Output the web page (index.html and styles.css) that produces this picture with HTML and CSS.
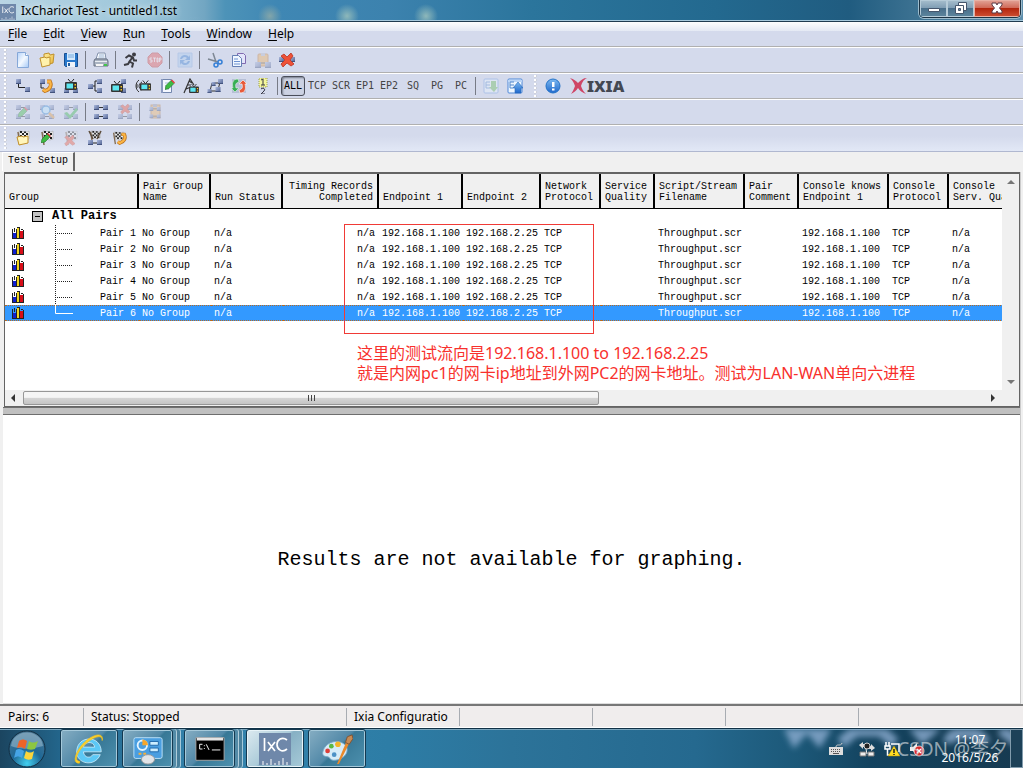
FILE: index.html
```html
<!DOCTYPE html>
<html lang="zh-CN">
<head>
<meta charset="utf-8">
<title>IxChariot Test - untitled1.tst</title>
<link rel="stylesheet" href="styles.css">
</head>
<body>
<svg class="sprite" aria-hidden="true">
  <defs>
    <linearGradient id="page-g" x1="0" y1="0" x2="1" y2="1"><stop offset="0" stop-color="#b4d2fa"/><stop offset=".5" stop-color="#f4f9ff"/><stop offset="1" stop-color="#a4c8f6"/></linearGradient>
    <linearGradient id="blue-g" x1="0" y1="0" x2="0" y2="1"><stop offset="0" stop-color="#7cb8f0"/><stop offset="1" stop-color="#1e68cc"/></linearGradient>
    <linearGradient id="gold-g" x1="0" y1="0" x2="1" y2="1"><stop offset="0" stop-color="#fff0a0"/><stop offset="1" stop-color="#e8b438"/></linearGradient>
    <linearGradient id="node-g" x1="0" y1="0" x2="1" y2="1"><stop offset="0" stop-color="#aab8dc"/><stop offset="1" stop-color="#4e6090"/></linearGradient>
    <radialGradient id="orb-g" cx=".5" cy=".9" r=".9"><stop offset="0" stop-color="#42d0f0"/><stop offset=".45" stop-color="#1f6896"/><stop offset="1" stop-color="#4c7894"/></radialGradient>
    <symbol id="node" viewBox="0 0 5 5"><path d="M0 0h5v5H0z" fill="url(#node-g)"/><path d="M0 4h5v1H0z" fill="#43537e"/></symbol>
    <symbol id="nodes4" viewBox="0 0 16 16"><path d="M4 3.500h8M4 12.500h8" stroke="#333"/><use href="#node" x="1" y="1" width="5" height="5"/><use href="#node" x="10" y="1" width="5" height="5"/><use href="#node" x="1" y="10" width="5" height="5"/><use href="#node" x="10" y="10" width="5" height="5"/></symbol>
    <symbol id="flag" viewBox="0 0 16 16"><path d="M4 1l8 1 2-1v8l-3 1-6-1z" fill="#eee" stroke="#999" stroke-width=".5"/><path d="M5 1h2v2h2v2h2V3h2v2h-2v2H9V5H7v2H5V5h2V3H5zM7 7h2v2H7zM11 7h2v2h-2zM9 1.500h2V3H9z" fill="#222"/><path d="M3 2l2 13" stroke="#806a50" stroke-width="1.500"/></symbol>
    <symbol id="tv" viewBox="0 0 12 11"><path d="M3 0l3 3.500L9 0" fill="none" stroke="#222"/><rect y="3" width="12" height="8" rx="1" fill="#333"/><path d="M1.500 4.500H8v5H1.500z" fill="#5de6f0"/><path d="M9.500 5h1.500v1.500H9.500zM9.500 8h1.500v1.500H9.500z" fill="#f4c62a"/></symbol>
    <symbol id="phone" viewBox="0 0 12 14"><path d="M6 2.500h3c2 4 0 8-5 9.500l-2-1.500" fill="none" stroke="#b9701c" stroke-width="3.800"/><path d="M6 2.500h3c2 4 0 8-5 9.500l-2-1.500" fill="none" stroke="#fbb545" stroke-width="2.400"/></symbol>
    <symbol id="pencil" viewBox="0 0 10 10"><path d="M0 10l1-4 5-5 3 3-5 5z" fill="#3dbb44" stroke="#27702b" stroke-width=".6"/><path d="M6 1l1-1 3 3-1 1z" fill="#e33838"/></symbol>
    <symbol id="cross" viewBox="0 0 14 14"><path d="M1 3l3-2 3 3 4-4 2 3-3 4 4 4-3 2-4-3-4 4-2-3 4-4z" fill="#ee5137" stroke="#b93422" stroke-width=".8"/></symbol>

    <symbol id="i-new" viewBox="0 0 16 16"><path d="M2.500.5h8l3 3v12h-11z" fill="url(#page-g)" stroke="#86a8d8"/><path d="M10.500.5v3h3" fill="#fff" stroke="#86a8d8"/></symbol>
    <symbol id="i-open" viewBox="0 0 16 16"><path d="M5 2l5-1 1 2 4-1-1 9-9 2z" fill="url(#gold-g)" stroke="#bf912e"/><path d="M1 6l5-1 1 1 4-1v8l-8 2z" fill="#fff2ac" stroke="#bf912e"/></symbol>
    <symbol id="i-save" viewBox="0 0 16 16"><path d="M1.500 1.500h13v13h-12l-1-1z" fill="#2878cc" stroke="#1a4f91"/><path d="M4 1h8v7H4z" fill="#d5e9fc"/><path d="M5 3h6M5 5h6" stroke="#74a9dd"/><path d="M4 10h8v5H4z" fill="#eef3fa"/><path d="M5 11h2v3H5z" fill="#245c9c"/></symbol>
    <symbol id="i-print" viewBox="0 0 16 16"><path d="M5 1h7l1 6H3z" fill="#fafcff" stroke="#8291ab"/><path d="M6 3h5M5.500 5h6" stroke="#9ab4d3"/><path d="M2 7h12l1 2v5H1V9z" fill="#a9b3c1" stroke="#667082"/><path d="M2 9.500h12" stroke="#e9edf2"/><path d="M3 12h7v2H3z" fill="#f5f5f5"/><path d="M11 12h3v2h-3z" fill="#43c64a"/></symbol>
    <symbol id="i-run" viewBox="0 0 16 16"><circle cx="11" cy="2.500" r="2" fill="#3c3c42"/><path d="M2.500 6L6 3.500l4 2 1 3h3M9 6L6.500 9.500l3.500 2-1 4M7 9l-2 3-4 1" fill="none" stroke="#3c3c42" stroke-width="2"/></symbol>
    <symbol id="i-stop" viewBox="0 0 16 16"><path d="M5 1h6l4 4v6l-4 4H5l-4-4V5z" fill="#e85450" stroke="#c33b3b"/><path d="M5 6H3v2h2v2H3M6 6h3M7.500 6v4M10 6h1v4h-1zM12.500 10V6H14v2h-1" fill="none" stroke="#fff" stroke-width=".8"/></symbol>
    <symbol id="i-refresh" viewBox="0 0 16 16"><path d="M1 1h14v14H1z" fill="#a8cbf1" stroke="#88aee0"/><path d="M3 7c1-5 7-5 9-2l1-2v5H8l2-2C8 4 6 5 5 7zM13 9c-1 5-7 5-9 2l-1 2V8h5l-2 2c2 2 4 1 5-1z" fill="#337bd0"/></symbol>
    <symbol id="i-cut" viewBox="0 0 16 16"><path d="M6 1l3 9M1 7l10 3" stroke="#7d8794" stroke-width="1.500"/><circle cx="9" cy="13" r="2" fill="none" stroke="#347fd6" stroke-width="1.500"/><circle cx="13" cy="10" r="2" fill="none" stroke="#347fd6" stroke-width="1.500"/></symbol>
    <symbol id="i-copy" viewBox="0 0 16 16"><path d="M6.500 1.500h6l2 2v8h-8z" fill="#e3e5fa" stroke="#806ab0"/><path d="M1.500 3.500h6l3 3v8h-9z" fill="#f1f7ff" stroke="#6680b5"/><path d="M3 7h4M3 9.500h6M3 12h6" stroke="#6d92d2"/></symbol>
    <symbol id="i-paste" viewBox="0 0 16 16"><rect x="3" y="2" width="10" height="12" rx="1" fill="#f1af54" stroke="#bd7b36"/><path d="M6 1h4v3H6z" fill="#b7b9c9"/><path d="M4 11h8" stroke="#444"/><use href="#node" x="0" y="10" width="6" height="6"/><use href="#node" x="10" y="10" width="6" height="6"/></symbol>
    <symbol id="i-delete" viewBox="0 0 16 16"><use href="#node" x="0" y="5" width="5" height="5"/><use href="#node" x="11" y="5" width="5" height="5"/><use href="#cross" x="1" y="1" width="14" height="14"/></symbol>
    <symbol id="i-pair" viewBox="0 0 16 16"><path d="M3.500 5v4.500H12" fill="none" stroke="#222"/><use href="#node" x="1" y="1" width="5" height="5"/><use href="#node" x="10" y="9" width="5" height="5"/></symbol>
    <symbol id="i-voip" viewBox="0 0 16 16"><use href="#node" x="1" y="1" width="5" height="5"/><use href="#node" x="11" y="10" width="5" height="5"/><path d="M2 6v4M2 10h3" stroke="#222"/><use href="#phone" x="2" y="1" width="12" height="14"/></symbol>
    <symbol id="i-video" viewBox="0 0 16 16"><use href="#node" x="1" y="10" width="5" height="5"/><use href="#node" x="10" y="10" width="5" height="5"/><use href="#tv" x="2" y="1" width="12" height="11"/></symbol>
    <symbol id="i-multi" viewBox="0 0 16 16"><path d="M5 8h3M12 3H8v10h4" fill="none" stroke="#222"/><use href="#node" x="1" y="6" width="5" height="5"/><use href="#node" x="10" y="1" width="5" height="5"/><use href="#node" x="10" y="10" width="5" height="5"/></symbol>
    <symbol id="i-multivideo" viewBox="0 0 16 16"><use href="#node" x="10" y="1" width="5" height="5"/><use href="#node" x="10" y="10" width="5" height="5"/><use href="#tv" x="0" y="3" width="12" height="11"/></symbol>
    <symbol id="i-iptv" viewBox="0 0 16 16"><path d="M4 2C0 5 0 11 4 14M7 4c-4 2-4 6 0 8M2 6v4" fill="none" stroke="#333"/><use href="#tv" x="5" y="2" width="11" height="11"/></symbol>
    <symbol id="i-edit" viewBox="0 0 16 16"><path d="M2.500 1.500h10v13h-10z" fill="#f4f7ff" stroke="#7387ae"/><path d="M2 1h2v14H2z" fill="#8b9ac0"/><path d="M6 5h5M6 8h4M6 11h4" stroke="#abc0dc"/><use href="#pencil" x="6" y="1" width="10" height="11"/></symbol>
    <symbol id="i-antenna" viewBox="0 0 16 16"><path d="M1 15L7 1l4 6M3 11l5-2M4 7h4M6 3l3 2" fill="none" stroke="#333" stroke-width="1.200"/><use href="#tv" x="6" y="6" width="10" height="9"/></symbol>
    <symbol id="i-rep" viewBox="0 0 16 16"><path d="M3 13h7M6 5h7M5 5l-2 8M13 4l-2 8" fill="none" stroke="#333"/><use href="#node" x="4" y="4" width="5" height="4"/><use href="#node" x="11" y="1" width="5" height="5"/><use href="#node" x="0" y="11" width="5" height="4"/><use href="#node" x="8" y="9" width="6" height="5"/></symbol>
    <symbol id="i-swap" viewBox="0 0 16 16"><path d="M1 1h14v14H1z" fill="#b6bfd6"/><path d="M7 1C1 1 1 6 2 10H0l4 4 4-4H5c-1-4 0-5 3-6z" fill="#38ae55" stroke="#e2f4e5" stroke-width=".6"/><path d="M9 15c6 0 6-5 5-9h2l-4-4-4 4h3c1 4 0 5-3 6z" fill="#e85a3a" stroke="#fff" stroke-width=".6"/></symbol>
    <symbol id="i-number" viewBox="0 0 16 16"><path d="M4 0h8v9H4z" fill="#f4f69b" stroke="#9b9e4b" stroke-dasharray="1 1"/><path d="M6 2l2-1v6M6 7h4M6 11c2-2 5 0 3 2l-3 3h4" fill="none" stroke="#343442"/></symbol>
    <symbol id="i-editpair" viewBox="0 0 16 16"><use href="#nodes4" width="16" height="16"/><use href="#pencil" x="3" y="3" width="10" height="10"/></symbol>
    <symbol id="i-findpair" viewBox="0 0 16 16"><use href="#nodes4" width="16" height="16"/><circle cx="7" cy="6" r="4" fill="#bae9ff" stroke="#388bd5" stroke-width="1.500"/><path d="M10 9l5 5" stroke="#df9b43" stroke-width="2.500"/></symbol>
    <symbol id="i-okpair" viewBox="0 0 16 16"><use href="#nodes4" width="16" height="16"/><path d="M1 9l3-1 3 3 6-7 2 2-8 9z" fill="#36b34b"/></symbol>
    <symbol id="i-delpair" viewBox="0 0 16 16"><use href="#nodes4" width="16" height="16"/><use href="#cross" x="3" y="0" width="10" height="10"/></symbol>
    <symbol id="i-pastepair" viewBox="0 0 16 16"><rect x="4" y="1" width="9" height="13" fill="#f2b463" stroke="#b77e43"/><path d="M6 0h4v3H6z" fill="#9b9cad"/><use href="#nodes4" y="2" width="16" height="13"/></symbol>
    <symbol id="i-flagopen" viewBox="0 0 16 16"><use href="#flag" width="16" height="16"/><path d="M2 7l5-1 1 1 5-1v7l-9 2z" fill="#fff5bb" stroke="#c18e28"/></symbol>
    <symbol id="i-flagedit" viewBox="0 0 16 16"><use href="#flag" width="16" height="16"/><use href="#pencil" x="2" y="3" width="10" height="10"/></symbol>
    <symbol id="i-flagdel" viewBox="0 0 16 16"><use href="#flag" width="16" height="16"/><use href="#cross" x="1" y="5" width="11" height="11"/></symbol>
    <symbol id="i-flagpair" viewBox="0 0 16 16"><use href="#flag" x="1" width="14" height="14"/><path d="M2 1l4 8M14 1l-4 8" stroke="#5c4c3c" stroke-width="1.500"/><path d="M5 13h7" stroke="#222"/><use href="#node" x="1" y="10" width="5" height="5"/><use href="#node" x="10" y="10" width="5" height="5"/></symbol>
    <symbol id="i-flagphone" viewBox="0 0 16 16"><use href="#flag" width="14" height="16"/><use href="#phone" x="5" y="2" width="11" height="13"/></symbol>
    <symbol id="i-import" viewBox="0 0 16 16"><rect x="1" y="1" width="14" height="14" rx="1" fill="#eef7ff" stroke="#6e9de0"/><path d="M3 4v6h4M3 4h4M3 7h4" fill="none" stroke="#5288cc"/><path d="M8 3h5v6h2l-4 5-5-5h2z" fill="#69bb57"/></symbol>
    <symbol id="i-export" viewBox="0 0 16 16"><rect x="1" y="1" width="14" height="14" rx="1" fill="#eef7ff" stroke="#4e88d9"/><path d="M1 2h14v2H1z" fill="#bcd6f7"/><path d="M3 4v6h3M3 4h4M3 7h4" fill="none" stroke="#5288cc"/><path d="M8 15v-5H6l5-6 5 6h-2v5z" fill="url(#blue-g)" stroke="#2868b8" stroke-width=".6"/></symbol>
    <symbol id="i-info" viewBox="0 0 16 16"><circle cx="8" cy="8" r="7" fill="url(#blue-g)" stroke="#2473c8"/><path d="M7 4h2.500v5H7zM7 10.500h2.500v2H7z" fill="#fff"/></symbol>
    <symbol id="chart" viewBox="0 0 12 12"><path d="M0 2h1v9h11v1H0zM2 1h1v4H2zM5 0h3v1H5zM9 2h2v1H9z" fill="#222"/><path d="M1 6h3v5H1z" fill="#1020d0"/><path d="M4 2h1v9H4zM7 1h1v10H7zM11 3h1v8h-1z" fill="#222"/><path d="M5 1h2v10H5z" fill="#f2d61f"/><path d="M8 4h3v7H8z" fill="#d80d18"/></symbol>
    <symbol id="branch" viewBox="0 0 18 16"><path d="M.5 0v16M2 8.500h16" fill="none" stroke="#222" stroke-dasharray="1 1"/></symbol>
    <symbol id="branch-end" viewBox="0 0 18 16"><path d="M.5 0v8.500H18" fill="none" stroke="#fff"/></symbol>
    <symbol id="ixc" viewBox="0 0 32 32"><path d="M0 0h32v32H0z" fill="#6f88aa"/><path d="M5.500 5v13M9 9l7 9M16 9l-7 9M28 7c-5-4-10 0-10 4.500s5 9 10 4.500" fill="none" stroke="#fff" stroke-width="1.700"/><path d="M4 28v4M8 30v2M12 26v6M16 30v2M20 28v4M24 25v7M28 29v3" stroke="#fff"/></symbol>
  </defs>
</svg>

<div class="window">
  <header class="titlebar">
    <svg class="app-icon"><use href="#ixc"/></svg>
    <h1 class="title">IxChariot Test - untitled1.tst</h1>
    <div class="caption-buttons">
      <button class="cap" aria-label="Minimize"><svg class="cap-icon" viewBox="0 0 14 12"><path d="M1.500 6.500h11v3h-11z" fill="#fff" stroke="#45566c"/></svg></button>
      <button class="cap" aria-label="Restore"><svg class="cap-icon" viewBox="0 0 14 12"><path d="M4.500.5h8v8h-8z" fill="#fff" stroke="#45566c"/><path d="M1.500 3.500h8v8h-8z" fill="#fff" stroke="#45566c"/><path d="M4.500 6.500h2v2h-2z" fill="#6c8ca3" stroke="#45566c"/></svg></button>
      <button class="cap cap-close" aria-label="Close"><svg class="cap-icon" viewBox="0 0 14 12"><path d="M2 1h4l1 2 1-2h4v2L9.500 6 12 9v2H8L7 9l-1 2H2V9l2.500-3L2 3z" fill="#fff" stroke="#5d3a45"/></svg></button>
    </div>
  </header>

  <nav class="menubar">
    <button class="menu"><u>F</u>ile</button><button class="menu"><u>E</u>dit</button><button class="menu"><u>V</u>iew</button><button class="menu"><u>R</u>un</button><button class="menu"><u>T</u>ools</button><button class="menu"><u>W</u>indow</button><button class="menu"><u>H</u>elp</button>
  </nav>

  <div class="toolbar">
    <i class="grip"></i>
    <button class="tool" aria-label="New"><svg class="icon"><use href="#i-new"/></svg></button>
    <button class="tool" aria-label="Open"><svg class="icon"><use href="#i-open"/></svg></button>
    <button class="tool" aria-label="Save"><svg class="icon"><use href="#i-save"/></svg></button>
    <i class="sep"></i>
    <button class="tool" aria-label="Print"><svg class="icon"><use href="#i-print"/></svg></button>
    <i class="sep"></i>
    <button class="tool" aria-label="Run"><svg class="icon"><use href="#i-run"/></svg></button>
    <button class="tool" aria-label="Stop" disabled><svg class="icon"><use href="#i-stop"/></svg></button>
    <i class="sep"></i>
    <button class="tool" aria-label="Refresh" disabled><svg class="icon"><use href="#i-refresh"/></svg></button>
    <i class="sep"></i>
    <button class="tool" aria-label="Cut"><svg class="icon"><use href="#i-cut"/></svg></button>
    <button class="tool" aria-label="Copy"><svg class="icon"><use href="#i-copy"/></svg></button>
    <button class="tool" aria-label="Paste" disabled><svg class="icon"><use href="#i-paste"/></svg></button>
    <button class="tool" aria-label="Delete"><svg class="icon"><use href="#i-delete"/></svg></button>
  </div>

  <div class="toolbar">
    <i class="grip"></i>
    <button class="tool" aria-label="Add pair"><svg class="icon"><use href="#i-pair"/></svg></button>
    <button class="tool" aria-label="Add VoIP pair"><svg class="icon"><use href="#i-voip"/></svg></button>
    <button class="tool" aria-label="Add video pair"><svg class="icon"><use href="#i-video"/></svg></button>
    <button class="tool" aria-label="Add multicast group"><svg class="icon"><use href="#i-multi"/></svg></button>
    <button class="tool" aria-label="Add video multicast group"><svg class="icon"><use href="#i-multivideo"/></svg></button>
    <button class="tool" aria-label="Add IPTV"><svg class="icon"><use href="#i-iptv"/></svg></button>
    <button class="tool" aria-label="Edit"><svg class="icon"><use href="#i-edit"/></svg></button>
    <button class="tool" aria-label="Edit broadcast"><svg class="icon"><use href="#i-antenna"/></svg></button>
    <button class="tool" aria-label="Replicate"><svg class="icon"><use href="#i-rep"/></svg></button>
    <button class="tool" aria-label="Swap endpoints"><svg class="icon"><use href="#i-swap"/></svg></button>
    <button class="tool" aria-label="Renumber"><svg class="icon"><use href="#i-number"/></svg></button>
    <i class="sep"></i>
    <button class="tool text-tool pressed" aria-pressed="true">ALL</button>
    <button class="tool text-tool">TCP</button>
    <button class="tool text-tool">SCR</button>
    <button class="tool text-tool">EP1</button>
    <button class="tool text-tool">EP2</button>
    <button class="tool text-tool">SQ</button>
    <button class="tool text-tool">PG</button>
    <button class="tool text-tool">PC</button>
    <i class="sep"></i>
    <button class="tool" aria-label="Import" disabled><svg class="icon"><use href="#i-import"/></svg></button>
    <button class="tool" aria-label="Export"><svg class="icon"><use href="#i-export"/></svg></button>
    <i class="grip grip-mid"></i>
    <button class="tool" aria-label="About"><svg class="icon"><use href="#i-info"/></svg></button>
    <span class="brand"><svg class="brand-mark" viewBox="0 0 17 16"><path d="M0 0c4 1 6 3 8 5 3-3 5-5 9-5-4 2-5 5-6 8 1 3 2 5 5 8-4-2-6-3-8-6-2 3-4 4-7 6 2-3 3-5 4-8C4 5 3 3 0 0z" fill="#cf4566"/></svg><b class="brand-name">IXIA</b></span>
  </div>

  <div class="toolbar">
    <i class="grip"></i>
    <button class="tool" aria-label="Edit pair" disabled><svg class="icon"><use href="#i-editpair"/></svg></button>
    <button class="tool" aria-label="Find pair" disabled><svg class="icon"><use href="#i-findpair"/></svg></button>
    <button class="tool" aria-label="Enable pair" disabled><svg class="icon"><use href="#i-okpair"/></svg></button>
    <i class="sep"></i>
    <button class="tool" aria-label="Pairs"><svg class="icon"><use href="#nodes4"/></svg></button>
    <button class="tool" aria-label="Delete pair" disabled><svg class="icon"><use href="#i-delpair"/></svg></button>
    <i class="sep"></i>
    <button class="tool" aria-label="Paste pair" disabled><svg class="icon"><use href="#i-pastepair"/></svg></button>
  </div>

  <div class="toolbar toolbar-last">
    <i class="grip"></i>
    <button class="tool" aria-label="Open application group"><svg class="icon"><use href="#i-flagopen"/></svg></button>
    <button class="tool" aria-label="Edit application group"><svg class="icon"><use href="#i-flagedit"/></svg></button>
    <button class="tool" aria-label="Delete application group" disabled><svg class="icon"><use href="#i-flagdel"/></svg></button>
    <button class="tool" aria-label="Add pair to group"><svg class="icon"><use href="#i-flagpair"/></svg></button>
    <button class="tool" aria-label="Add VoIP to group"><svg class="icon"><use href="#i-flagphone"/></svg></button>
  </div>

  <div class="tabs"><button class="tab">Test Setup</button></div>

  <main class="content">
    <section class="list">
      <div class="list-view">
        <table class="pairs">
          <colgroup><col class="w-group"><col class="w72"><col class="w72"><col class="w96"><col class="w84"><col class="w78"><col class="w60"><col class="w54"><col class="w90"><col class="w54"><col class="w90"><col class="w60"><col class="w84"></colgroup>
          <thead><tr><th>Group</th><th>Pair Group<br>Name</th><th>Run Status</th><th class="right">Timing Records<br>Completed</th><th>Endpoint 1</th><th>Endpoint 2</th><th>Network<br>Protocol</th><th>Service<br>Quality</th><th>Script/Stream<br>Filename</th><th>Pair<br>Comment</th><th>Console knows<br>Endpoint 1</th><th>Console<br>Protocol</th><th>Console<br>Serv. Quality</th></tr></thead>
          <tbody>
            <tr><td colspan="13"><div class="all-pairs"><button class="collapse" aria-label="Collapse"></button><b>All Pairs</b></div></td></tr>
            <tr><td><div class="pair"><svg class="chart"><use href="#chart"/></svg><svg class="branch"><use href="#branch"/></svg><span class="pair-name">Pair 1</span></div></td><td>No Group</td><td>n/a</td><td class="right">n/a</td><td>192.168.1.100</td><td>192.168.2.25</td><td>TCP</td><td></td><td>Throughput.scr</td><td></td><td>192.168.1.100</td><td>TCP</td><td>n/a</td></tr>
            <tr><td><div class="pair"><svg class="chart"><use href="#chart"/></svg><svg class="branch"><use href="#branch"/></svg><span class="pair-name">Pair 2</span></div></td><td>No Group</td><td>n/a</td><td class="right">n/a</td><td>192.168.1.100</td><td>192.168.2.25</td><td>TCP</td><td></td><td>Throughput.scr</td><td></td><td>192.168.1.100</td><td>TCP</td><td>n/a</td></tr>
            <tr><td><div class="pair"><svg class="chart"><use href="#chart"/></svg><svg class="branch"><use href="#branch"/></svg><span class="pair-name">Pair 3</span></div></td><td>No Group</td><td>n/a</td><td class="right">n/a</td><td>192.168.1.100</td><td>192.168.2.25</td><td>TCP</td><td></td><td>Throughput.scr</td><td></td><td>192.168.1.100</td><td>TCP</td><td>n/a</td></tr>
            <tr><td><div class="pair"><svg class="chart"><use href="#chart"/></svg><svg class="branch"><use href="#branch"/></svg><span class="pair-name">Pair 4</span></div></td><td>No Group</td><td>n/a</td><td class="right">n/a</td><td>192.168.1.100</td><td>192.168.2.25</td><td>TCP</td><td></td><td>Throughput.scr</td><td></td><td>192.168.1.100</td><td>TCP</td><td>n/a</td></tr>
            <tr><td><div class="pair"><svg class="chart"><use href="#chart"/></svg><svg class="branch"><use href="#branch"/></svg><span class="pair-name">Pair 5</span></div></td><td>No Group</td><td>n/a</td><td class="right">n/a</td><td>192.168.1.100</td><td>192.168.2.25</td><td>TCP</td><td></td><td>Throughput.scr</td><td></td><td>192.168.1.100</td><td>TCP</td><td>n/a</td></tr>
            <tr class="selected"><td><div class="pair"><svg class="chart"><use href="#chart"/></svg><svg class="branch"><use href="#branch-end"/></svg><span class="pair-name">Pair 6</span></div></td><td>No Group</td><td>n/a</td><td class="right">n/a</td><td>192.168.1.100</td><td>192.168.2.25</td><td>TCP</td><td></td><td>Throughput.scr</td><td></td><td>192.168.1.100</td><td>TCP</td><td>n/a</td></tr>
          </tbody>
        </table>
      </div>
      <div class="vscroll"><svg class="arrow" viewBox="0 0 8 8"><path d="M0 6l4-4 4 4z" fill="#777"/></svg><svg class="arrow" viewBox="0 0 8 8"><path d="M0 2l4 4 4-4z" fill="#777"/></svg></div>
      <div class="hscroll"><svg class="arrow" viewBox="0 0 8 8"><path d="M6 0L2 4l4 4z" fill="#333"/></svg><div class="track"><div class="thumb"><i></i><i></i><i></i></div></div><svg class="arrow" viewBox="0 0 8 8"><path d="M2 0l4 4-4 4z" fill="#333"/></svg></div>
      <div class="mark-box"></div>
      <p class="mark-text">这里的测试流向是192.168.1.100 to 192.168.2.25<br>就是内网pc1的网卡ip地址到外网PC2的网卡地址。测试为LAN-WAN单向六进程</p>
    </section>
    <div class="splitter"></div>
    <section class="graph">Results are not available for graphing.</section>
  </main>

  <footer class="status">
    <span class="cell cell-pairs">Pairs: 6</span><span class="cell cell-state">Status: Stopped</span><span class="cell cell-config">Ixia Configuratio</span><span class="cell cell-blank"></span><span class="cell cell-blank"></span><span class="cell cell-blank"></span>
  </footer>

  <div class="taskbar">
    <svg class="wallpaper" viewBox="0 0 240 40"><g fill="none" stroke="#8eaed2" stroke-width="11"><path d="M4-6l8 16 12-14 12 14 10-16M58 14L72 2h26l14 12M128-6l12 14 14-12M166 14c0-14 32-14 36 0M216 2c12 0 10 10 20 10"/></g></svg>
    <button class="start" aria-label="Start"><svg class="orb" viewBox="0 0 38 38"><circle cx="19" cy="19" r="18" fill="url(#orb-g)" stroke="#122e42"/><path d="M3 16c2-18 30-18 32 0-10 3-22 4-32 0z" fill="#c5dce8" opacity=".4"/><path d="M11 11c3-2 5-2 8 0l-2 8c-3-2-5-2-8-1z" fill="#ed6428"/><path d="M21 11c3 2 5 2 9 0l-3 8c-3 1-5 1-8 0z" fill="#8cc641"/><path d="M8 20c3-2 5-1 8 1l-2 7c-3-2-5-2-8 0z" fill="#46a4e6"/><path d="M18 21c3 2 5 2 8 0l-2 8c-3 1-5 1-8-1z" fill="#fcd53c"/></svg></button>
    <button class="task" aria-label="Internet Explorer"><svg class="task-icon" viewBox="0 0 34 34"><path d="M30 20H11c1 7 8 7 10 3h8C23 37 3 33 4 19 5 2 30 2 30 20zM11 15h12c-1-7-11-6-12 0z" fill="#5cc8f5" stroke="#d4f2ff" stroke-width=".8"/><path d="M7 32C-2 33 3 18 13 9 22 1 33-1 31 8c0-8-10-3-17 3C5 19 0 30 7 30z" fill="#fbd12c" stroke="#f3c01c" stroke-width=".8"/></svg></button>
    <button class="task task-stack" aria-label="Control Panel"><svg class="task-icon" viewBox="0 0 34 34"><rect x="2" y="5" width="30" height="22" rx="2" fill="#4a9ee0" stroke="#bfe3fa"/><circle cx="11" cy="13" r="5" fill="none" stroke="#e3f4ff" stroke-width="2"/><path d="M11 13V7a6 6 0 016 6z" fill="#f7a62b"/><path d="M19 9h9v4h-9zM19 16h9v4h-9z" fill="#cdeeff" stroke="#1e67aa"/><path d="M7 22h3M12 22h3" stroke="#f7ae38" stroke-width="2"/><ellipse cx="17" cy="28" rx="7" ry="5" fill="#e1e4e8" stroke="#999"/></svg></button>
    <button class="task task-stack" aria-label="Command Prompt"><svg class="task-icon" viewBox="0 0 34 34"><path d="M2 5h30v24H2z" fill="#000" stroke="#aaa"/><path d="M3 5h28v3H3z" fill="#e4e4e4"/><path d="M9 12H6v5h3M11 13v1M11 16v1M13 12l3 6M19 18h9" fill="none" stroke="#fff"/></svg></button>
    <button class="task task-active" aria-label="IxChariot"><svg class="task-icon"><use href="#ixc"/></svg></button>
    <button class="task" aria-label="Paint"><svg class="task-icon" viewBox="0 0 34 34"><path d="M2 20C4 10 18 5 26 13c5 6-1 16-13 16-4 0-3-4-7-4-3 0-5-2-4-5z" fill="#d7ecf8" stroke="#7aaac9"/><circle cx="7" cy="19" r="2.500" fill="#dc3e38"/><circle cx="11" cy="14" r="2.500" fill="#5ab944"/><circle cx="18" cy="12" r="3" fill="#f3b52a"/><circle cx="14" cy="23" r="2.500" fill="#4d91c6"/><path d="M17 33l10-24 3 2-11 22z" fill="#e98a2b"/><path d="M26 10l2-6 5-2 1 4-4 6z" fill="#c68b55" stroke="#825332"/></svg></button>
    <div class="tray">
      <svg class="tray-icon" viewBox="0 0 16 16"><path d="M1 6h14v8H1z" fill="#ddd"/><path d="M3 8.500h10M3 10.500h10" stroke="#555" stroke-dasharray="1 1"/><path d="M5 12.500h6" stroke="#555"/><path d="M8 6c0-4 5 0 6-4" fill="none" stroke="#ccc"/></svg>
      <svg class="tray-icon tray-network" viewBox="0 0 16 16"><path d="M0 4l4-3v2h4v3H4v2zM16 7l-4-4v2H8v3h4v2z" fill="#ddd"/><circle cx="8" cy="5" r="3" fill="#222" stroke="#ccc"/><path d="M1 11h6v4H1zM9 11h6v4H9z" fill="#eee" stroke="#777"/><path d="M7 8l1 5" stroke="#eee"/></svg>
      <svg class="tray-icon" viewBox="0 0 16 16"><path d="M2 1v4M5 1v4M1 5h5v3H1zM3.500 8v6H7M7 3h8v8" fill="none" stroke="#fff" stroke-width="1.500"/><path d="M10 5l6 10H4z" fill="#ffdc22" stroke="#b18d00" stroke-width=".5"/><path d="M10 8v4M10 13v1" stroke="#222" stroke-width="1.500"/></svg>
      <svg class="tray-icon" viewBox="0 0 16 16"><path d="M1 6h3l4-4v12l-4-4H1z" fill="#eee"/><circle cx="10" cy="10" r="5" fill="#d92b2b" stroke="#fff" stroke-width=".7"/><path d="M8 8l4 4M12 8l-4 4" stroke="#fff" stroke-width="1.500"/></svg>
      <div class="clock"><span>11:07</span><span>2016/5/26</span></div>
    </div>
    <button class="show-desktop" aria-label="Show desktop"></button>
    <span class="watermark">CSDN @李夕</span>
  </div>
</div>
</body>
</html>
```
FILE: styles.css
```css
* { box-sizing: border-box; }
body { margin: 0; font: 12px/16px "Noto Sans", "Noto Sans CJK SC", sans-serif; color: #000; }
button { margin: 0; padding: 0; border: 0; background: none; font: inherit; color: inherit; }
svg { display: block; flex: none; }
.sprite { position: absolute; width: 0; height: 0; }
.window { display: flex; flex-direction: column; min-height: 100vh; overflow: hidden; background: #f0f0f0; }

.titlebar {
  display: flex; align-items: flex-start; height: 22px; padding-right: 2px; overflow: hidden;
  border-bottom: 1px solid #203c50; box-shadow: inset 0 -1px #a6c9dc;
  background:
    radial-gradient(circle at 347px 16px, #8eb8ba 0, transparent 12px),
    radial-gradient(circle at 426px 16px, #8eb8ba 0, transparent 12px),
    radial-gradient(circle at 270px 16px, #82a5aa 0, transparent 12px),
    radial-gradient(ellipse at 195px 18px, #9db9d8 0, transparent 24px),
    linear-gradient(90deg, #b9d5e4 0, #9cc6da 14%, #72a6c2 20%, #4d93b8 22%, #3f87b4 27%, #3c82ae 38%, #2b759c 52%, #23698f 70%, #205c80 83%, #3a7090 89%, #5e8eac 100%);
}
.app-icon { width: 16px; height: 16px; margin-top: 4px; }
.title { flex: 1; margin: 3px 0 0 5px; font-size: 12px; line-height: 16px; font-weight: 400; text-shadow: 0 0 6px #fff; }
.caption-buttons { display: flex; height: 18px; border: 1px solid #1d3445; border-top: 0; border-radius: 0 0 5px 5px; box-shadow: 0 0 0 1px #9dbccd; overflow: hidden; }
.cap { display: grid; place-items: center; width: 27px; padding-bottom: 2px; background: linear-gradient(#a7bfce 0, #819fb5 45%, #496f8b 50%, #5d869e 100%); box-shadow: inset 0 0 0 1px #b5cbd8; }
.cap-close { width: 46px; background: linear-gradient(#e3a498 0, #d06b5a 45%, #b3260e 50%, #cf5034 100%); box-shadow: inset 0 0 0 1px #e8b0a4; }
.cap-icon { width: 14px; height: 12px; }

.menubar { display: flex; gap: 16px; height: 26px; padding: 3px 8px 5px; border-bottom: 1px solid #fff; box-shadow: inset 0 -1px #b0b0b0; background: linear-gradient(#fdfefe, #e4e9f4 9px, #d4daec 9px); }
.menu { line-height: 16px; }
.menu u { text-underline-offset: 2px; }
.toolbar { display: flex; align-items: center; height: 26px; padding-bottom: 1px; border-bottom: 1px solid #fff; box-shadow: inset 0 -1px #b0b0b0; background: #d4daec; }
.toolbar-last { border-bottom-color: #b0b8d0; box-shadow: none; background: linear-gradient(#d4daec 40%, #e2e8f6); }
.grip { width: 3px; height: 22px; margin: 0 4px; background: radial-gradient(circle at 1px 1px, #fff 0, #fff 1px, #abb0c0 2px, transparent 2px) 0 0 / 3px 4px; }
.grip-mid { margin: 0 4px 0 7px; }
.tool { display: grid; place-items: center; width: 24px; height: 22px; }
.tool:disabled { opacity: .38; }
.icon { width: 16px; height: 16px; }
.text-tool { font: 10px/12px "DejaVu Sans Mono", monospace; color: #444; }
.pressed { border: 1px solid #4a4e5a; border-radius: 3px; color: #000; background: #ccd2e3; box-shadow: inset 1px 1px 2px #777d8c; height: 20px; }
.sep { width: 6px; height: 18px; background: linear-gradient(90deg, transparent 2px, #777b86 2px, #777b86 3px, transparent 3px); }
.brand { display: flex; align-items: center; margin-left: 5px; color: #444853; }
.brand-mark { width: 17px; height: 16px; }
.brand-name { font: 900 16px/16px "Noto Sans", sans-serif; }

.tabs { display: flex; height: 20px; padding-left: 2px; }
.tab { height: 19px; padding: 0 5px 3px; border: solid #fff; border-width: 1px 0 0 1px; border-right: 2px solid #666; font: 10px/15px "Liberation Mono", monospace; }
.content { flex: 1; display: flex; flex-direction: column; margin: 0 2px 0 3px; border-right: 1px solid #ccc; }
.list { position: relative; display: grid; grid-template: 1fr 16px / 1fr 17px; height: 235px; margin: 0 0 0 1px; border: solid #646464; border-width: 2px 1px 1px; }
.list-view { overflow: hidden; background: #fff; }
.pairs { table-layout: fixed; width: 1028px; border-collapse: separate; border-spacing: 0; font: 10px/13px "Liberation Mono", monospace; }
.w-group { width: 134px; } .w54 { width: 54px; } .w60 { width: 60px; } .w72 { width: 72px; } .w78 { width: 78px; } .w84 { width: 84px; } .w90 { width: 90px; } .w96 { width: 96px; }
.pairs th { height: 35px; padding: 0 3px 5px 4px; border-right: 2px solid #000; border-bottom: 1px solid #000; background: #f0f0f0; font-weight: 400; line-height: 11px; text-align: left; vertical-align: bottom; white-space: nowrap; }
.pairs td { height: 16px; padding: 1px 0 0 3px; border: solid transparent; border-width: 1px 0; white-space: nowrap; }
.pairs .right { text-align: right; padding-right: 4px; }
.pairs td:first-child { padding: 0; border-width: 0; }
.pairs .selected td { background: #3399ff; color: #fff; border: dotted #b86a20; border-width: 1px 0; }
.all-pairs { display: flex; align-items: center; gap: 9px; height: 16px; padding: 0 0 1px 27px; font-size: 12px; }
.collapse { width: 11px; height: 11px; border: 1px solid #000; background: linear-gradient(#000, #000) center / 5px 1px no-repeat #c4c4c4; }
.pair { display: flex; align-items: center; height: 16px; padding: 0 3px 0 7px; }
.selected .pair { height: 14px; }
.chart { width: 12px; height: 12px; margin-right: 31px; }
.branch { width: 18px; height: 16px; }
.pair-name { margin-left: auto; padding-top: 1px; }
.vscroll { display: flex; flex-direction: column; align-items: center; justify-content: space-between; padding: 4px 0; background: #f0f0f0; }
.arrow { width: 8px; height: 8px; }
.hscroll { grid-column: 1 / 3; display: flex; align-items: center; padding: 0 22px 0 4px; background: #f0f0f0; }
.track { flex: 1; padding: 0 6px; }
.thumb { display: flex; align-items: center; justify-content: center; gap: 2px; width: 60%; height: 14px; border: 1px solid #979797; border-radius: 2px; background: linear-gradient(#f5f5f5 45%, #d5d5d5 50%, #c4c4c4); }
.thumb i { width: 1px; height: 6px; background: #444; }
.mark-box { position: absolute; left: 339px; top: 50px; width: 250px; height: 110px; border: 1px solid #f03a36; }
.mark-text { position: absolute; left: 352px; top: 169px; margin: 0; font-size: 16px; line-height: 20px; color: #f8302c; white-space: nowrap; }
.splitter { height: 8px; background: #c0c0c0; border: solid #6e6e6e; border-width: 1px 0; }
.graph { flex: 1; display: flex; align-items: center; justify-content: center; padding-top: 2px; background: #fff; font: 20px/24px "Liberation Mono", monospace; border-bottom: 1px solid #ddd; }

.status { display: flex; align-items: center; height: 24px; border-top: 2px solid #777; border-bottom: 1px solid #fff; background: #f0eded; }
.cell { height: 18px; line-height: 18px; padding-left: 7px; border-right: 1px solid #a8acb2; }
.cell-pairs { width: 84px; padding-left: 8px; }
.cell-state { width: 263px; }
.cell-config { width: 113px; }
.cell-blank { width: 133px; }

.taskbar {
  position: relative; display: flex; align-items: stretch; height: 40px; border-top: 1px solid #123247; box-shadow: inset 0 1px #7ba6bd; overflow: hidden;
  background: linear-gradient(90deg, #1b4560 0, #23668c 6%, #3584ad 20%, #2d7da6 38%, #2c7399 50%, #25698f 68%, #1c5878 78%, #13435f 85%, #173a50 100%);
}
.wallpaper { position: absolute; right: 0; top: 0; width: 240px; height: 40px; filter: blur(3px); opacity: .8; }
.start { display: grid; place-items: center; width: 54px; margin-right: 6px; }
.orb { width: 38px; height: 38px; }
.task { display: grid; place-items: center; width: 58px; margin: 0 4px 0 0; border: 1px solid #143950; border-radius: 3px; box-shadow: inset 0 0 0 1px #a5c9da; background: linear-gradient(135deg, #86aec3 0, #5289a8 48%, #387896 52%, #4d91af 100%); }
.task-stack { width: 51px; margin-right: 11px; box-shadow: inset 0 0 0 1px #a5c9da, 3px 0 #538ba7, 4px 0 #b0cddb, 7px 0 #487f9b, 8px 0 #a5c9da; }
.task-active { background: linear-gradient(135deg, #dceaf0 0, #abcbd9 48%, #86b0c4 52%, #a7cad8 100%); box-shadow: inset 0 0 0 1px #e8f4f8; }
.task-icon { width: 32px; height: 32px; }
.tray { position: relative; display: flex; align-items: center; gap: 9px; margin-left: auto; color: #fff; }
.tray-icon { width: 16px; height: 16px; }
.tray-network { margin-left: 6px; }
.clock { display: flex; flex-direction: column; width: 76px; padding-right: 4px; text-align: center; line-height: 18px; }
.show-desktop { position: relative; width: 13px; border: 1px solid #829cad; background: #1d4158; }
.watermark { position: absolute; right: 15px; top: 8px; font-size: 19px; line-height: 24px; color: rgba(220, 224, 228, .65); }
```
